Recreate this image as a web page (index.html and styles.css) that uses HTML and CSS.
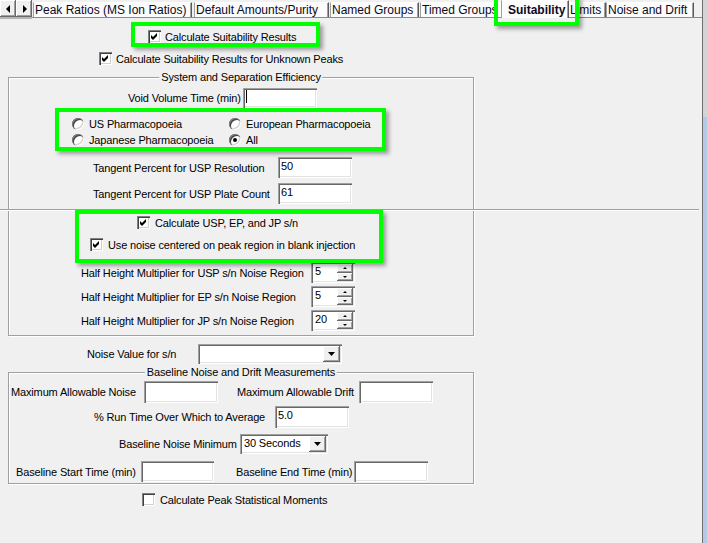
FILE: index.html
```html
<!DOCTYPE html>
<html lang="en">
<head>
<meta charset="utf-8">
<title>Suitability</title>
<link rel="stylesheet" href="styles.css">
</head>
<body>
<div class="page">
  <div class="main">
    <div class="tabbar">
      <div class="arrows">
        <div class="abtn"><span class="tri-l"></span></div>
        <div class="abtn"><span class="tri-r"></span></div>
      </div>
      <div class="tab tab-1">Peak Ratios (MS Ion Ratios)</div>
      <div class="tab tab-2">Default Amounts/Purity</div>
      <div class="tab tab-3">Named Groups</div>
      <div class="tab tab-4">Timed Groups</div>
      <div class="tab tab-sel">Suitability</div>
      <div class="tab tab-6">Limits</div>
      <div class="tab tab-7">Noise and Drift</div>
    </div>

    <div class="row r-calc">
      <span class="cb"><svg viewBox="0 0 13 13" width="13" height="13"><path d="M3 5v3l2 2 4-4V3L5 7z"/></svg></span>
      <span>Calculate Suitability Results</span>
    </div>
    <div class="row r-unk">
      <span class="cb"><svg viewBox="0 0 13 13" width="13" height="13"><path d="M3 5v3l2 2 4-4V3L5 7z"/></svg></span>
      <span>Calculate Suitability Results for Unknown Peaks</span>
    </div>

    <div class="grp g1">
      <span class="gtitle">System and Separation Efficiency</span>
      <div class="row r-void">
        <span class="lbl w-void">Void Volume Time (min)</span>
        <span class="tb w74 h20"><span class="caret"></span></span>
      </div>
      <div class="radios">
        <span class="ropt"><span class="rb"></span><span>US Pharmacopoeia</span></span>
        <span class="ropt"><span class="rb"></span><span>European Pharmacopoeia</span></span>
        <span class="ropt"><span class="rb"></span><span>Japanese Pharmacopoeia</span></span>
        <span class="ropt"><span class="rb"><span class="dot"></span></span><span>All</span></span>
      </div>
      <div class="row r-tan1">
        <span class="lbl w-tan">Tangent Percent for USP Resolution</span>
        <span class="tb w74 h21">50</span>
      </div>
      <div class="row r-tan2">
        <span class="lbl w-tan">Tangent Percent for USP Plate Count</span>
        <span class="tb w74 h21">61</span>
      </div>
      <div class="sep"></div>
      <div class="row r-usp">
        <span class="cb"><svg viewBox="0 0 13 13" width="13" height="13"><path d="M3 5v3l2 2 4-4V3L5 7z"/></svg></span>
        <span>Calculate USP, EP, and JP s/n</span>
      </div>
      <div class="row r-blank">
        <span class="cb"><svg viewBox="0 0 13 13" width="13" height="13"><path d="M3 5v3l2 2 4-4V3L5 7z"/></svg></span>
        <span>Use noise centered on peak region in blank injection</span>
      </div>
      <div class="row r-hh r-hh1">
        <span class="lbl w-hh">Half Height Multiplier for USP s/n Noise Region</span>
        <span class="spin"><span class="spin-txt">5</span><span class="spin-btns"><span class="sbtn"><span class="up"></span></span><span class="sbtn"><span class="down"></span></span></span></span>
      </div>
      <div class="row r-hh r-hh2">
        <span class="lbl w-hh">Half Height Multiplier for EP s/n Noise Region</span>
        <span class="spin"><span class="spin-txt">5</span><span class="spin-btns"><span class="sbtn"><span class="up"></span></span><span class="sbtn"><span class="down"></span></span></span></span>
      </div>
      <div class="row r-hh r-hh2">
        <span class="lbl w-hh">Half Height Multiplier for JP s/n Noise Region</span>
        <span class="spin"><span class="spin-txt">20</span><span class="spin-btns"><span class="sbtn"><span class="up"></span></span><span class="sbtn"><span class="down"></span></span></span></span>
      </div>
    </div>

    <div class="row r-nv">
      <span class="lbl w-nv">Noise Value for s/n</span>
      <span class="dd w-dd1"><span class="dd-val"></span><span class="dd-btn"><svg viewBox="0 0 7 4" width="7" height="4"><polygon points="0,0 7,0 3.5,4"/></svg></span></span>
    </div>

    <div class="grp g2">
      <span class="gtitle">Baseline Noise and Drift Measurements</span>
      <div class="row r-max">
        <span class="lbl w-maxn">Maximum Allowable Noise</span>
        <span class="tb w74 h22"></span>
        <span class="lbl w-maxd">Maximum Allowable Drift</span>
        <span class="tb w74 h22"></span>
      </div>
      <div class="row r-run">
        <span class="lbl w-run">% Run Time Over Which to Average</span>
        <span class="tb w74 h22">5.0</span>
      </div>
      <div class="row r-min">
        <span class="lbl w-min">Baseline Noise Minimum</span>
        <span class="dd w-dd2"><span class="dd-val">30 Seconds</span><span class="dd-btn"><svg viewBox="0 0 7 4" width="7" height="4"><polygon points="0,0 7,0 3.5,4"/></svg></span></span>
      </div>
      <div class="row r-start">
        <span class="lbl w-st">Baseline Start Time (min)</span>
        <span class="tb w73 h21"></span>
        <span class="lbl w-en">Baseline End Time (min)</span>
        <span class="tb w74 h21"></span>
      </div>
    </div>

    <div class="row r-stat">
      <span class="cb"></span>
      <span>Calculate Peak Statistical Moments</span>
    </div>

    <div class="hl hl1"></div>
    <div class="hl hl2"></div>
    <div class="hl hl3"></div>
    <div class="hl hl4"></div>
  </div>
  <div class="edge"><div class="edge-top"></div><div class="edge-bot"></div></div>
</div>
</body>
</html>
```

FILE: styles.css
```css
* { box-sizing: border-box; }
html, body { margin: 0; padding: 0; }
body {
  background: #f0f0f0;
  font-family: "Liberation Sans", Arial, sans-serif;
  font-size: 11px;
  letter-spacing: -0.15px;
  color: #000;
}
.page { display: flex; width: 707px; height: 543px; overflow: hidden; }
.main { position: relative; flex: none; width: 702px; height: 543px; }
.edge { flex: none; width: 5px; height: 543px; border-left: 1px solid #6f6f6f; display: flex; flex-direction: column; }
.edge-top { height: 117px; background: #d4d4d4; }
.edge-bot { flex: 1; background: #b4c9e4; }

/* tab strip */
.tabbar { display: flex; align-items: flex-end; height: 18px; border-bottom: 1px solid #8a8a8a; }
.arrows { display: flex; align-self: flex-start; height: 19px; border-bottom: 2px solid #b4b4b4; }
.abtn {
  width: 16px; height: 17px; background: #f0f0f0;
  box-shadow: inset -1px -1px #696969, inset 1px 1px #fff, inset -2px -2px #a0a0a0;
  display: flex; align-items: center; justify-content: center;
}
.tri-l { width: 0; height: 0; border-top: 4px solid transparent; border-bottom: 4px solid transparent; border-right: 4px solid #000; }
.tri-r { width: 0; height: 0; border-top: 4px solid transparent; border-bottom: 4px solid transparent; border-left: 4px solid #000; margin-left: 1px; }
.tab {
  flex: none; height: 15px; margin-left: 1px;
  background: #fcfcfc;
  border-top: 1px solid #fff; border-left: 1px solid #a0a0a0; border-right: 1px solid #5a5a5a;
  box-shadow: inset -1px 0 #a0a0a0;
  font-family: Arial, "Liberation Sans", sans-serif;
  font-size: 12px; letter-spacing: 0; line-height: 14px;
  padding-left: 1px; white-space: nowrap; overflow: hidden; color: #0a0a1e;
}
.tab-1 { width: 159px; }
.tab-2 { width: 135px; margin-left: 2px; }
.tab-3 { width: 89px; }
.tab-4 { width: 84px; }
.tab-sel {
  position: relative; z-index: 1; width: 68px; height: 18px;
  margin-left: -3px; margin-bottom: -1px; padding-top: 2px; padding-left: 6px;
  font-weight: bold; background: #fcfcfc;
}
.tab-6 { width: 39px; margin-left: -2px; padding-left: 2px; }
.tab-7 { width: 88px; margin-left: 0; }

/* generic rows */
.row { display: flex; align-items: center; white-space: nowrap; }
.lbl { flex: none; white-space: nowrap; }

/* checkbox */
.cb {
  flex: none; width: 13px; height: 13px; background: #fff; display: block;
  box-shadow: inset 1px 1px #808080, inset 2px 2px #404040, inset -1px -1px #fff, inset -2px -2px #d4d0c8;
}
.cb svg { display: block; }
.cb path { fill: #000; }

/* radio */
.rb {
  flex: none; width: 12px; height: 12px; border-radius: 50%; background: #fff;
  box-shadow: inset 1px 1px #808080, inset 2px 2px #404040, inset -1px -1px #fff, inset -2px -2px #d4d0c8;
  display: flex; align-items: center; justify-content: center;
}
.dot { width: 4px; height: 4px; border-radius: 50%; background: #000; }

/* textboxes */
.tb {
  flex: none; display: block; background: #fff;
  box-shadow: inset 1px 1px #a0a0a0, inset 2px 2px #696969, inset -1px -1px #fff, inset -2px -2px #e3e3e3;
  padding: 3px 2px 0 3px; line-height: 13px;
}
.w74 { width: 74px; }
.w73 { width: 73px; }
.h20 { height: 20px; }
.h21 { height: 21px; }
.h22 { height: 22px; }
.caret { display: block; width: 1px; height: 13px; background: #000; margin-top: -1px; }

/* spin */
.spin {
  flex: none; display: flex; width: 44px; height: 21px; background: #fff; padding: 2px;
  box-shadow: inset 1px 1px #a0a0a0, inset 2px 2px #696969, inset -1px -1px #fff, inset -2px -2px #e3e3e3;
}
.spin-txt { flex: 1; padding: 1px 0 0 2px; line-height: 13px; }
.spin-btns { flex: none; width: 16px; display: flex; flex-direction: column; }
.sbtn {
  flex: 1; background: #f0f0f0; display: flex; align-items: center; justify-content: center;
  box-shadow: inset -1px -1px #696969, inset 1px 1px #fff, inset -2px -2px #a0a0a0;
}
.up { width: 0; height: 0; border-left: 2px solid transparent; border-right: 2px solid transparent; border-bottom: 2px solid #000; }
.down { width: 0; height: 0; border-left: 2px solid transparent; border-right: 2px solid transparent; border-top: 2px solid #000; }

/* dropdown */
.dd {
  flex: none; display: flex; height: 20px; background: #fff; padding: 2px;
  box-shadow: inset 1px 1px #a0a0a0, inset 2px 2px #696969, inset -1px -1px #fff, inset -2px -2px #e3e3e3;
}
.dd-val { flex: 1; padding: 1px 0 0 2px; line-height: 13px; }
.dd-btn {
  flex: none; width: 17px; background: #f0f0f0; display: flex; align-items: center; justify-content: center;
  box-shadow: inset -1px -1px #696969, inset 1px 1px #fff, inset -2px -2px #a0a0a0;
}
.dd-btn svg { display: block; }
.dd-btn polygon { fill: #000; }
.w-dd1 { width: 144px; }
.w-dd2 { width: 88px; }

/* group boxes */
.grp {
  position: relative; margin-left: 8px; width: 466px;
  border: 1px solid #a0a0a0;
  box-shadow: 1px 1px 0 #fff, inset 1px 1px 0 #fff;
}
.gtitle {
  position: absolute; top: -7px; left: 50%; transform: translateX(-50%);
  background: #f0f0f0; padding: 0 2px; line-height: 13px; white-space: nowrap;
}
.g1 { margin-top: 12px; height: 259px; }
.g2 { margin-top: 8px; height: 112px; }

/* top rows */
.r-calc { margin-top: 12px; height: 13px; padding-left: 148px; gap: 4px; }
.r-unk { margin-top: 9px; height: 13px; padding-left: 99px; gap: 4px; }

/* group 1 rows */
.r-void { margin-top: 10px; height: 20px; padding-left: 119px; }
.w-void { width: 115px; }
.radios {
  margin-top: 8px; padding-left: 63px;
  display: grid; grid-template-columns: 157px auto; grid-auto-rows: 16px;
}
.ropt { display: flex; align-items: center; gap: 5px; white-space: nowrap; }
.r-tan1 { margin-top: 9px; height: 21px; padding-left: 84px; }
.r-tan2 { margin-top: 5px; height: 21px; padding-left: 84px; }
.w-tan { width: 185px; }
.sep { margin-top: 5px; margin-left: -9px; width: 699px; height: 2px; border-top: 1px solid #a0a0a0; border-bottom: 1px solid #fff; }
.r-usp { margin-top: 5px; height: 13px; padding-left: 128px; gap: 5px; }
.r-blank { margin-top: 9px; height: 13px; padding-left: 81px; gap: 5px; }
.r-hh { height: 21px; padding-left: 72px; }
.r-hh1 { margin-top: 11px; }
.r-hh2 { margin-top: 3px; }
.w-hh { width: 230px; }

/* noise value */
.r-nv { margin-top: 8px; height: 20px; padding-left: 87px; }
.w-nv { width: 111px; }

/* group 2 rows */
.r-max { margin-top: 8px; height: 22px; padding-left: 2px; }
.w-maxn { width: 133px; }
.w-maxd { width: 122px; margin-left: 19px; }
.r-run { margin-top: 3px; height: 22px; padding-left: 85px; }
.w-run { width: 181px; }
.r-min { margin-top: 6px; height: 20px; padding-left: 110px; }
.w-min { width: 121px; }
.r-start { margin-top: 7px; height: 21px; padding-left: 7px; }
.w-st { width: 125px; }
.w-en { width: 118px; margin-left: 22px; }

.r-stat { margin-top: 9px; height: 13px; padding-left: 142px; gap: 5px; }

/* highlight annotations */
.hl { position: absolute; border: 4px solid #00ff00; box-shadow: 3px 3px 4px rgba(0, 0, 0, 0.35); pointer-events: none; }
.hl1 { left: 131px; top: 22px; width: 189px; height: 25px; }
.hl2 { left: 55px; top: 108px; width: 331px; height: 43px; }
.hl3 { left: 75px; top: 210px; width: 308px; height: 53px; }
.hl4 { left: 494px; top: -4px; width: 85px; height: 30px; }
```
